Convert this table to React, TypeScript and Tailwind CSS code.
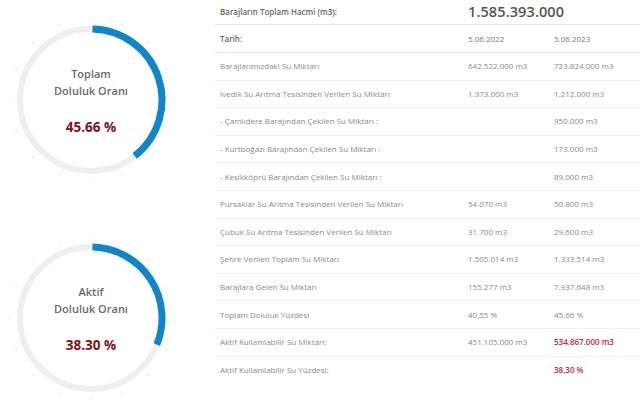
import React from 'react';

type Row = {
  label: string;
  a: string;
  b: string;
  red?: boolean;
};

const rows: Row[] = [
  { label: 'Barajlarımızdaki Su Miktarı', a: '642.522.000 m3', b: '723.824.000 m3' },
  { label: 'İvedik Su Arıtma Tesisinden Verilen Su Miktarı', a: '1.373.000 m3', b: '1.212.000 m3' },
  { label: '- Çamlıdere Barajından Çekilen Su Miktarı :', a: '', b: '950.000 m3' },
  { label: '- Kurtboğazı Barajından Çekilen Su Miktarı :', a: '', b: '173.000 m3' },
  { label: '- Kesikköprü Barajından Çekilen Su Miktarı :', a: '', b: '89.000 m3' },
  { label: 'Pursaklar Su Arıtma Tesisinden Verilen Su Miktarı', a: '54.070 m3', b: '50.800 m3' },
  { label: 'Çubuk Su Arıtma Tesisinden Verilen Su Miktarı', a: '31.700 m3', b: '29.600 m3' },
  { label: 'Şehre Verilen Toplam Su Miktarı', a: '1.505.014 m3', b: '1.333.514 m3' },
  { label: 'Barajlara Gelen Su Miktarı', a: '155.277 m3', b: '7.937.648 m3' },
  { label: 'Toplam Doluluk Yüzdesi', a: '40,55 %', b: '45,66 %' },
  { label: 'Aktif Kullanılabilir Su Miktarı:', a: '451.105.000 m3', b: '534.867.000 m3', red: true },
  { label: 'Aktif Kullanılabilir Su Yüzdesi:', a: '', b: '38,30 %', red: true },
];

function Gauge({ title, value, sweep }: { title: string; value: string; sweep: number }) {
  const cx = 85;
  const cy = 85;
  const r = 71;
  const rad = (sweep * Math.PI) / 180;
  const ex = cx + r * Math.sin(rad);
  const ey = cy - r * Math.cos(rad);
  const large = sweep > 180 ? 1 : 0;
  const dots = Array.from({ length: 16 }, (_, i) => (i * 360) / 16);

  return (
    <div className="relative w-[170px] h-[170px]">
      <svg width="170" height="170" viewBox="0 0 170 170">
        {dots.map((d) => (
          <circle
            key={d}
            cx={cx + 81 * Math.sin((d * Math.PI) / 180)}
            cy={cy - 81 * Math.cos((d * Math.PI) / 180)}
            r="0.7"
            fill="#d8d8d8"
          />
        ))}
        <circle cx={cx} cy={cy} r={r} fill="none" stroke="#eeeeee" strokeWidth={6} />
        <path
          d={`M ${cx + 1.5} ${cy - r} A ${r} ${r} 0 ${large} 1 ${ex} ${ey}`}
          fill="none"
          stroke="#0e86c9"
          strokeWidth={7}
        />
      </svg>
      <div className="absolute inset-0 flex flex-col items-center">
        <div className="mt-[50px] text-[11px] leading-[17px] font-semibold text-[#6a6a6a]">{title}</div>
        <div className="text-[11px] leading-[17px] font-semibold text-[#6a6a6a]">Doluluk Oranı</div>
        <div className="mt-[18px] text-[13.5px] leading-[20px] font-bold text-[#7d1414]">{value}</div>
      </div>
    </div>
  );
}

export default function App() {
  return (
    <div className="w-[640px] h-[411px] bg-white flex overflow-hidden" style={{ fontFamily: '"Open Sans", sans-serif' }}>
      <div className="w-[182px] shrink-0 flex flex-col items-center pt-[15px] gap-[48px]">
        <Gauge title="Toplam" value="45.66 %" sweep={142} />
        <Gauge title="Aktif" value="38.30 %" sweep={112} />
      </div>

      <div className="ml-[33px] flex-1">
        <div className="flex items-center h-[25px] border-b border-[#e6e6e6]">
          <div className="w-[249px] pl-[5px] text-[8px] font-semibold text-[#666]">Barajların Toplam Hacmi (m3):</div>
          <div className="pl-[4px] text-[14.5px] font-semibold text-[#555] tracking-[0.1px]">1.585.393.000</div>
        </div>
        <div className="flex items-center h-[28px] border-b border-[#e6e6e6]">
          <div className="w-[249px] pl-[5px] text-[8px] font-semibold text-[#666]">Tarih:</div>
          <div className="w-[85px] pl-[4px] text-[8px] text-[#777]">5.06.2022</div>
          <div className="pl-[5px] text-[8px] text-[#777]">5.06.2023</div>
        </div>
        {rows.map((row, i) => (
          <div
            key={row.label}
            className={`flex items-center h-[27.6px] text-[8px] text-[#8a8a8a] ${i < rows.length - 1 ? 'border-b border-[#eeeeee]' : ''}`}
          >
            <div className="w-[249px] pl-[5px]">{row.label}</div>
            <div className="w-[85px] pl-[4px]">{row.a}</div>
            <div className={`pl-[5px] ${row.red ? 'text-[#c1272d] font-semibold' : ''}`}>{row.b}</div>
          </div>
        ))}
      </div>
    </div>
  );
}
